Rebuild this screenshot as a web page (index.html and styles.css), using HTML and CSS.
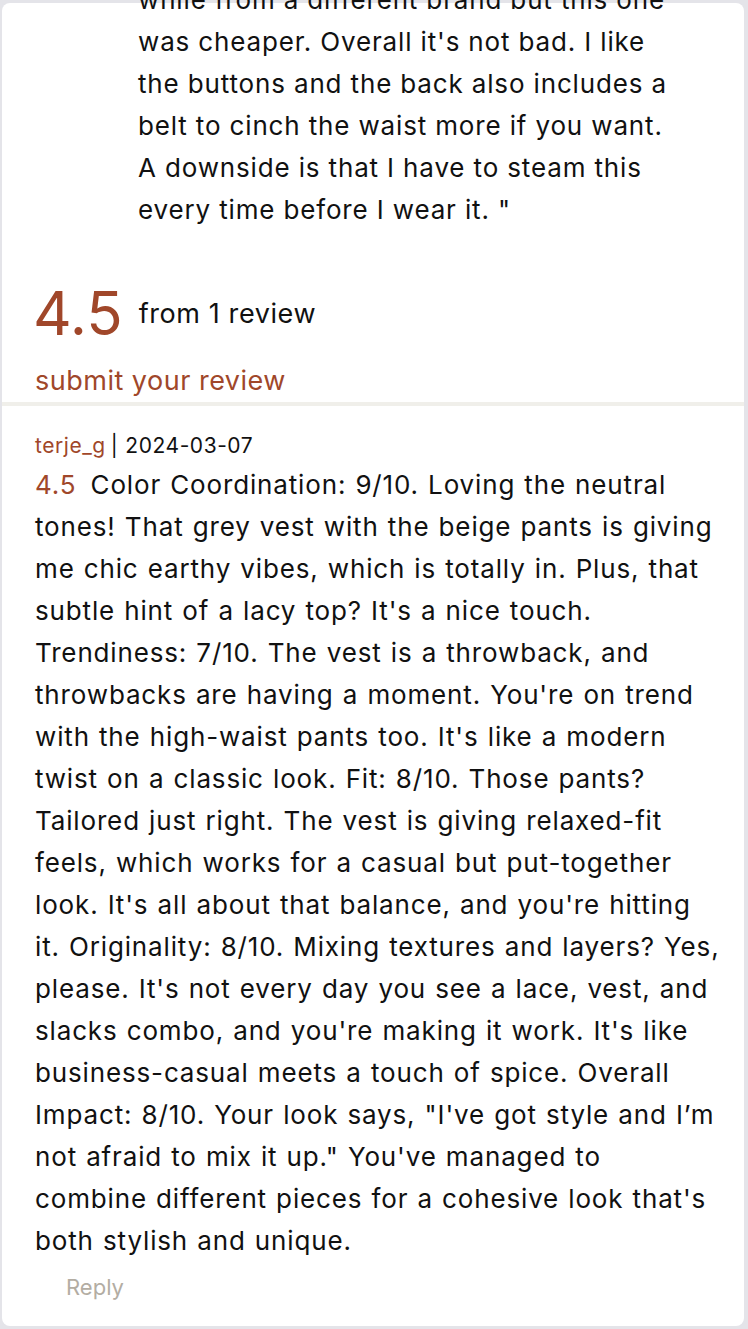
FILE: index.html
```html
<!DOCTYPE html>
<html lang="en">
<head>
<meta charset="utf-8">
<title>Reviews</title>
<link rel="stylesheet" href="styles.css">
</head>
<body>
<div class="card">
  <section class="summary">
    <p class="quote">while from a different brand but this one was cheaper. Overall it's not bad. I like the buttons and the back also includes a belt to cinch the waist more if you want. A downside is that I have to steam this every time before I wear it. "</p>
    <div class="rating-row">
      <span class="big-score">4.5</span>
      <span class="count">from 1 review</span>
    </div>
    <a class="submit" href="#">submit your review</a>
  </section>
  <div class="divider"></div>
  <article class="review">
    <div class="meta"><span class="author">terje_g</span><span class="sep">|</span><span class="date">2024-03-07</span></div>
    <p class="body"><span class="score">4.5</span> Color Coordination: 9/10. Loving the neutral tones! That grey vest with the beige pants is giving me chic earthy vibes, which is totally in. Plus, that subtle hint of a lacy top? It's a nice touch. Trendiness: 7/10. The vest is a throwback, and throwbacks are having a moment. You're on trend with the high-waist pants too. It's like a modern twist on a classic look. Fit: 8/10. Those pants? Tailored just right. The vest is giving relaxed-fit feels, which works for a casual but put-together look. It's all about that balance, and you're hitting it. Originality: 8/10. Mixing textures and layers? Yes, please. It's not every day you see a lace, vest, and slacks combo, and you're making it work. It's like business-casual meets a touch of spice. Overall Impact: 8/10. Your look says, "I've got style and I’m not afraid to mix it up." You've managed to combine different pieces for a cohesive look that's both stylish and unique.</p>
    <div class="actions"><a class="reply" href="#">Reply</a></div>
  </article>
</div>
</body>
</html>
```
FILE: styles.css
```css
html, body {
  margin: 0;
  padding: 0;
}
body {
  background: #e4e4e9;
  font-family: Inter, "Noto Sans", sans-serif;
  color: #111;
  height: 1329px;
  overflow: hidden;
}
.card {
  margin: 3px 4px 0 2px;
  background: #fff;
  border-radius: 8px;
  height: 1323px;
  box-sizing: border-box;
}
.summary {
  padding: 0 33px;
}
.quote {
  margin: 0;
  position: relative;
  top: -24px;
  margin-bottom: -24px;
  padding-left: 103px;
  padding-right: 29px;
  font-size: 26px;
  letter-spacing: 0.85px;
  line-height: 42px;
}
.rating-row {
  display: flex;
  align-items: center;
  height: 76px;
  margin-top: 44px;
}
.big-score {
  font-size: 60px;
  line-height: 76px;
  color: #a0472a;
  margin-left: -2px;
  margin-right: 16px;
}
.count {
  font-size: 27px;
  letter-spacing: 0.6px;
}
.submit {
  display: block;
  margin-top: 9px;
  font-size: 27px;
  letter-spacing: 0.5px;
  line-height: 42px;
  color: #a0472a;
  text-decoration: none;
}
.divider {
  height: 4px;
  background: #f0efea;
}
.review {
  padding: 25px 23.5px 0 33px;
}
.meta {
  font-size: 21px;
  letter-spacing: 0.55px;
  line-height: 30px;
  display: flex;
  align-items: center;
}
.author {
  color: #a0472a;
}
.sep {
  margin: 0 7px 0 5px;
}
.body {
  margin: 3px 0 0;
  font-size: 26px;
  letter-spacing: 0.85px;
  word-spacing: 1px;
  line-height: 42px;
}
.score {
  color: #a0472a;
  margin-right: 5px;
}
.actions {
  margin-top: 10px;
  padding-left: 31px;
}
.reply {
  font-size: 22px;
  line-height: 30px;
  color: #b3ada3;
  text-decoration: none;
}
```
